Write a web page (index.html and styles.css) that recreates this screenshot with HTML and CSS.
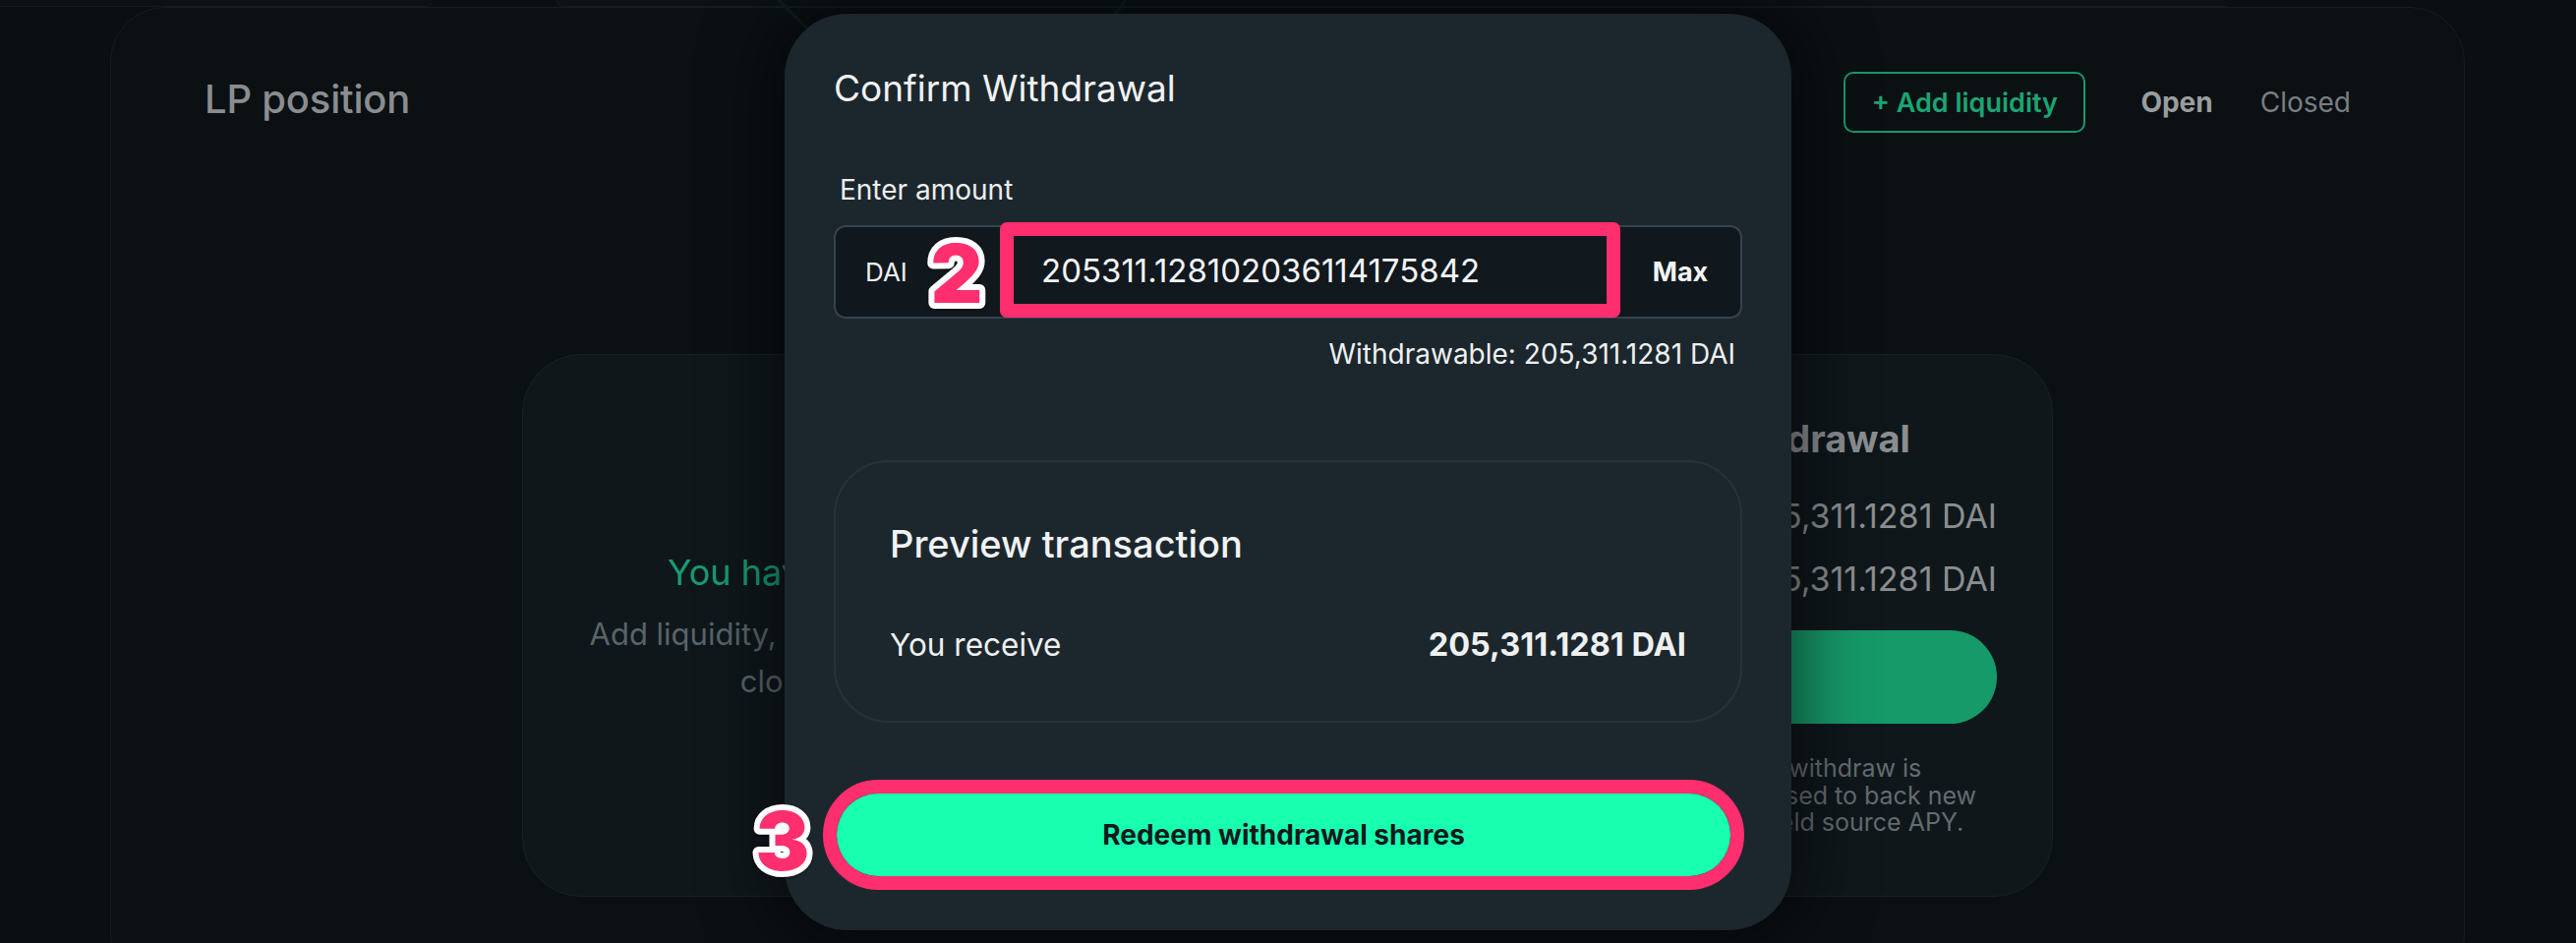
FILE: index.html
```html
<!DOCTYPE html>
<html lang="en">
<head>
<meta charset="utf-8">
<title>LP position – Confirm Withdrawal</title>
<link rel="stylesheet" href="styles.css">
</head>
<body>
<div class="page">
  <div class="topnav">
    <div class="topnav-tab topnav-a"></div>
    <div class="topnav-tab topnav-b"></div>
  </div>

  <section class="panel">
    <header class="panel-head">
      <h1 class="panel-title">LP position</h1>
      <div class="head-actions">
        <button class="add-btn">+ Add liquidity</button>
        <nav class="state-tabs">
          <span class="state-tab state-open">Open</span>
          <span class="state-tab state-closed">Closed</span>
        </nav>
      </div>
    </header>

    <div class="cards">
      <div class="card card-empty">
        <h2 class="empty-title">You have no open positions</h2>
        <p class="empty-text">Add liquidity, view your open positions and<br>closed positions here.</p>
      </div>
      <div class="card card-withdraw">
        <h2 class="withdraw-title">Available for withdrawal</h2>
        <div class="withdraw-row"><span>Withdrawable</span><span>205,311.1281 DAI</span></div>
        <div class="withdraw-row row-two"><span>Total</span><span>205,311.1281 DAI</span></div>
        <button class="withdraw-btn">Withdraw</button>
        <p class="withdraw-note">The liquidity available for your withdraw is<br>the part of the pool that is not yet used to back new<br>positions, while it still earns the yield source APY.</p>
      </div>
    </div>
  </section>

  <svg class="deco" width="2620" height="40" viewBox="0 0 2620 40">
    <line x1="792" y1="0" x2="822" y2="30" stroke="#0f1d1c" stroke-width="3"/>
    <line x1="1145" y1="0" x2="1123" y2="30" stroke="#0f1d1c" stroke-width="3"/>
  </svg>

  <div class="modal">
    <h2 class="modal-title">Confirm Withdrawal</h2>
    <div class="field-label">Enter amount</div>
    <div class="amount-box">
      <span class="token">DAI</span>
      <svg class="badge badge-inline" width="70" height="90" viewBox="0 0 70 90">
        <text x="35" y="76" text-anchor="middle" class="badge-text">2</text>
      </svg>
      <div class="amount-field">205311.128102036114175842</div>
      <div class="max">Max</div>
    </div>
    <div class="withdrawable">Withdrawable: 205,311.1281 DAI</div>

    <div class="preview">
      <h3 class="preview-title">Preview transaction</h3>
      <div class="preview-row"><span>You receive</span><span class="preview-value">205,311.1281 DAI</span></div>
    </div>

    <div class="redeem-ring">
      <button class="redeem-btn">Redeem withdrawal shares</button>
    </div>

    <svg class="badge badge-three" width="70" height="90" viewBox="0 0 70 90">
      <text x="35" y="76" text-anchor="middle" class="badge-text">3</text>
    </svg>
  </div>
</div>
</body>
</html>
```

FILE: styles.css
```css
* { box-sizing: border-box; }

html, body {
  margin: 0;
  padding: 0;
  background: #0a0f12;
  overflow: hidden;
}

body {
  font-family: Inter, "Noto Sans", "Liberation Sans", sans-serif;
  color: #eef0f1;
}

.page {
  position: relative;
  width: 2620px;
  height: 959px;
  overflow: hidden;
}

/* top navigation remnants */
.topnav {
  display: flex;
  height: 7px;
}
.topnav-tab {
  height: 7px;
  background: #0b1114;
  border-bottom: 1px solid #141c20;
}
.topnav-a {
  width: 440px;
  border-right: 1px solid #141c20;
  border-bottom-right-radius: 7px;
}
.topnav-b {
  width: 1700px;
  margin-left: 126px;
  border-left: 1px solid #141c20;
  border-bottom-left-radius: 7px;
}

.deco {
  position: absolute;
  left: 0;
  top: 0;
  pointer-events: none;
}

/* main panel */
.panel {
  margin: 0 113px 0 112px;
  height: 1000px;
  border: 1px solid #151d21;
  border-radius: 56px;
  background: #0b1013;
}

.panel-head {
  display: flex;
  justify-content: space-between;
  align-items: center;
  height: 62px;
  margin-top: 65px;
  padding: 0 115px 0 95px;
}

.panel-title {
  margin: 0;
  padding-bottom: 7px;
  font-size: 40px;
  line-height: 48px;
  font-weight: 500;
  color: #8a8d90;
  letter-spacing: -0.2px;
}

.head-actions {
  display: flex;
  align-items: center;
}

.add-btn {
  width: 246px;
  height: 62px;
  margin-right: 56px;
  border: 2px solid #169a6a;
  border-radius: 10px;
  background: transparent;
  color: #1aa673;
  font-family: inherit;
  font-size: 27px;
  font-weight: 600;
}

.state-tabs {
  display: flex;
  align-items: center;
  gap: 48px;
  font-size: 28px;
}
.state-open { font-weight: 700; color: #9a9d9f; }
.state-closed { font-weight: 400; color: #7a7e81; }

/* cards */
.cards {
  display: flex;
  justify-content: center;
  gap: 27px;
  margin-top: 225px;
}

.card {
  width: 765px;
  height: 552px;
  border: 1px solid #172125;
  border-radius: 60px;
  background: #0f171b;
}

.card-empty {
  display: flex;
  flex-direction: column;
  align-items: center;
  padding-top: 199px;
  text-align: center;
}
.empty-title {
  margin: 0;
  font-size: 36px;
  line-height: 44px;
  font-weight: 400;
  color: #169d73;
}
.empty-text {
  margin: 17px 0 0;
  font-size: 31px;
  line-height: 48px;
  color: #59646a;
}

.card-withdraw {
  display: flex;
  flex-direction: column;
  padding: 62px 56px 0;
}
.withdraw-title {
  margin: 0;
  padding-left: 28px;
  font-size: 38px;
  line-height: 46px;
  font-weight: 700;
  color: #8b8e90;
  text-align: center;
}
.withdraw-row {
  display: flex;
  justify-content: space-between;
  margin-top: 36px;
  font-size: 34px;
  line-height: 40px;
  color: #8b8e90;
}
.withdraw-row.row-two { margin-top: 24px; }

.withdraw-btn {
  margin-top: 32px;
  height: 95px;
  border: 0;
  border-radius: 48px;
  background: #169a6a;
  color: #0d1417;
  font-family: inherit;
  font-size: 27px;
  font-weight: 700;
}
.withdraw-note {
  margin: 32px 0 0;
  font-size: 25px;
  line-height: 27.5px;
  color: #646c71;
  text-align: center;
}

/* modal */
.modal {
  position: absolute;
  left: 798px;
  top: 14px;
  width: 1024px;
  height: 932px;
  padding: 54px 50px 0;
  border-radius: 64px;
  background: #1c272d;
  box-shadow: 0 0 70px 12px rgba(0, 0, 0, 0.55);
}

.modal-title {
  margin: 0;
  font-size: 37px;
  line-height: 44px;
  font-weight: 400;
  color: #f1f2f3;
}

.field-label {
  margin: 65px 0 19px 6px;
  font-size: 28px;
  line-height: 33px;
  color: #eceeef;
}

.amount-box {
  display: flex;
  align-items: center;
  height: 95px;
  padding-left: 30px;
  border: 2px solid #36434a;
  border-radius: 12px;
  background: #11181d;
}
.token {
  width: 58px;
  font-size: 26px;
  color: #eef0f1;
}
.badge-inline {
  flex: none;
  margin-right: 9px;
}
.amount-field {
  flex: none;
  width: 631px;
  align-self: stretch;
  margin: -5px 0 -1px;
  display: flex;
  align-items: center;
  padding-left: 28px;
  border: 14px solid #ff2e6e;
  border-radius: 7px;
  background: #11181e;
  font-size: 33px;
  color: #f3f4f5;
}
.max {
  flex: 1;
  text-align: center;
  font-size: 27px;
  font-weight: 700;
  color: #f3f4f5;
}

.badge-text {
  font-family: Inter, "Noto Sans", sans-serif;
  font-size: 82px;
  font-weight: 900;
  fill: #ff2e6e;
  stroke: #ffffff;
  stroke-width: 12px;
  stroke-linejoin: round;
  paint-order: stroke fill;
}
.badge {
  filter: drop-shadow(0 1px 1px rgba(0, 0, 0, 0.5));
}
.badge-three {
  position: absolute;
  left: -37px;
  top: 795px;
}

.withdrawable {
  margin-top: 20px;
  padding-right: 7px;
  text-align: right;
  font-size: 28px;
  line-height: 33px;
  color: #eef0f1;
}

.preview {
  margin-top: 91px;
  height: 267px;
  padding: 60px 55px 0;
  border: 2px solid #26323a;
  border-radius: 56px;
  background: #1c272d;
}
.preview-title {
  margin: 0;
  font-size: 38px;
  line-height: 46px;
  font-weight: 500;
  color: #f1f2f3;
}
.preview-row {
  display: flex;
  justify-content: space-between;
  margin-top: 60px;
  font-size: 31.5px;
  line-height: 40px;
  color: #eef0f1;
}
.preview-value {
  font-weight: 700;
  font-size: 32.5px;
}

.redeem-ring {
  margin: 58px -2px 0 -11px;
  border: 14px solid #ff2e6e;
  border-radius: 56px;
}
.redeem-btn {
  display: block;
  width: 100%;
  height: 84px;
  border: 0;
  border-radius: 42px;
  background: #19ffb0;
  color: #11191d;
  font-family: inherit;
  font-size: 28px;
  font-weight: 700;
}
```
